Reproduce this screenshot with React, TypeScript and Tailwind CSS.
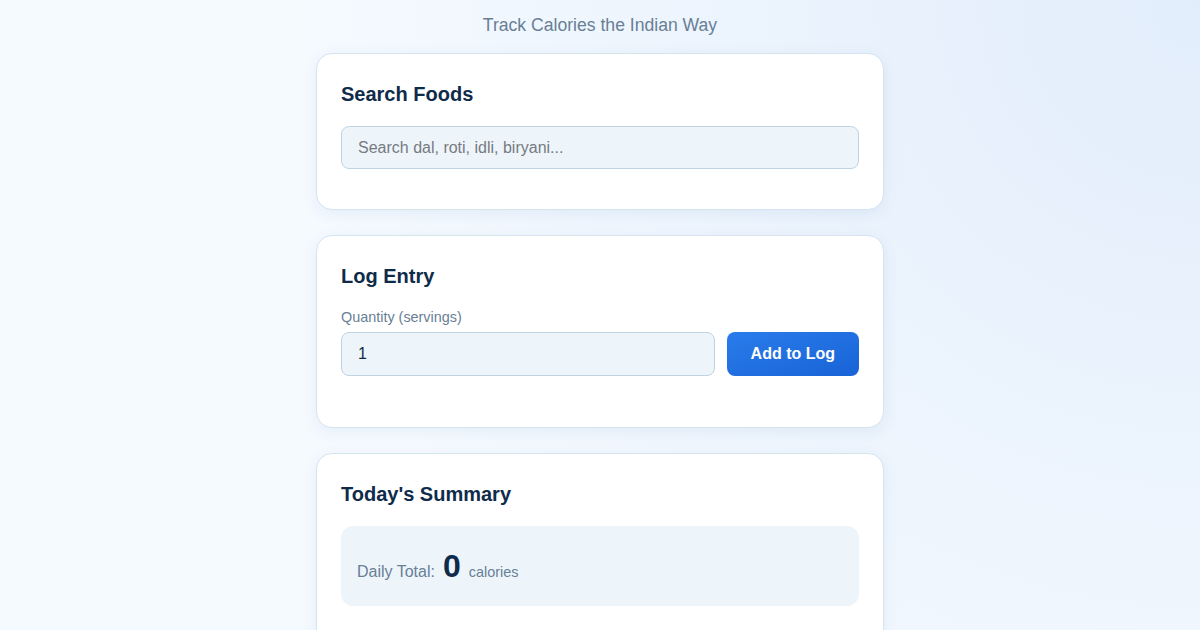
import React, { useState } from 'react';

const Card: React.FC<{ title: string; children: React.ReactNode }> = ({ title, children }) => (
  <section className="w-[568px] rounded-2xl border border-[#d6e4f0] bg-white p-6 shadow-[0_4px_16px_rgba(40,90,150,0.08)]">
    <h2 className="mb-4 text-[20px] font-bold leading-8 text-[#0f2b4a]">{title}</h2>
    {children}
  </section>
);

const App: React.FC = () => {
  const [query, setQuery] = useState('');
  const [qty, setQty] = useState('1');

  return (
    <div className="min-h-screen bg-[#f5faff] bg-[radial-gradient(circle_at_top_right,#e2edfb_0%,#f5faff_66%)] bg-fixed pb-10 font-['Liberation_Sans',Arial,sans-serif]">
      <div className="flex flex-col items-center">
        <p className="mt-[12px] mb-[15px] text-[17.6px] leading-[26px] text-[#687f96]">
          Track Calories the Indian Way
        </p>

        <div className="flex flex-col gap-[25px]">
          <Card title="Search Foods">
            <input
              type="text"
              value={query}
              onChange={(e) => setQuery(e.target.value)}
              placeholder="Search dal, roti, idli, biryani..."
              className="mb-4 block h-[43px] w-full rounded-lg border border-[#bfd3e2] bg-[#edf5fb] px-4 text-[16px] text-[#0f2b4a] outline-none placeholder:text-[#777b80]"
            />
          </Card>

          <Card title="Log Entry">
            <label className="mb-[5px] block text-[14.4px] leading-[19px] text-[#687f96]">
              Quantity (servings)
            </label>
            <div className="mb-[27px] flex gap-3">
              <input
                type="number"
                value={qty}
                onChange={(e) => setQty(e.target.value)}
                className="block h-[44px] min-w-0 flex-1 rounded-lg border border-[#bfd3e2] bg-[#edf5fb] px-4 text-[16px] text-[#0f2b4a] outline-none [appearance:textfield] [&::-webkit-inner-spin-button]:appearance-none"
              />
              <button className="h-[44px] rounded-lg bg-gradient-to-br from-[#2a7ceb] to-[#1863d7] px-6 text-[16px] font-bold text-white">
                Add to Log
              </button>
            </div>
          </Card>

          <Card title="Today's Summary">
            <div className="flex items-baseline rounded-xl bg-[#edf5fb] px-4 py-5">
              <span className="text-[16px] text-[#687f96]">Daily Total:</span>
              <span className="mx-2 text-[32px] font-bold leading-[40px] text-[#0f2b4a]">0</span>
              <span className="text-[14.4px] text-[#687f96]">calories</span>
            </div>
            <div className="h-24" />
          </Card>
        </div>
      </div>
    </div>
  );
};

export default App;
